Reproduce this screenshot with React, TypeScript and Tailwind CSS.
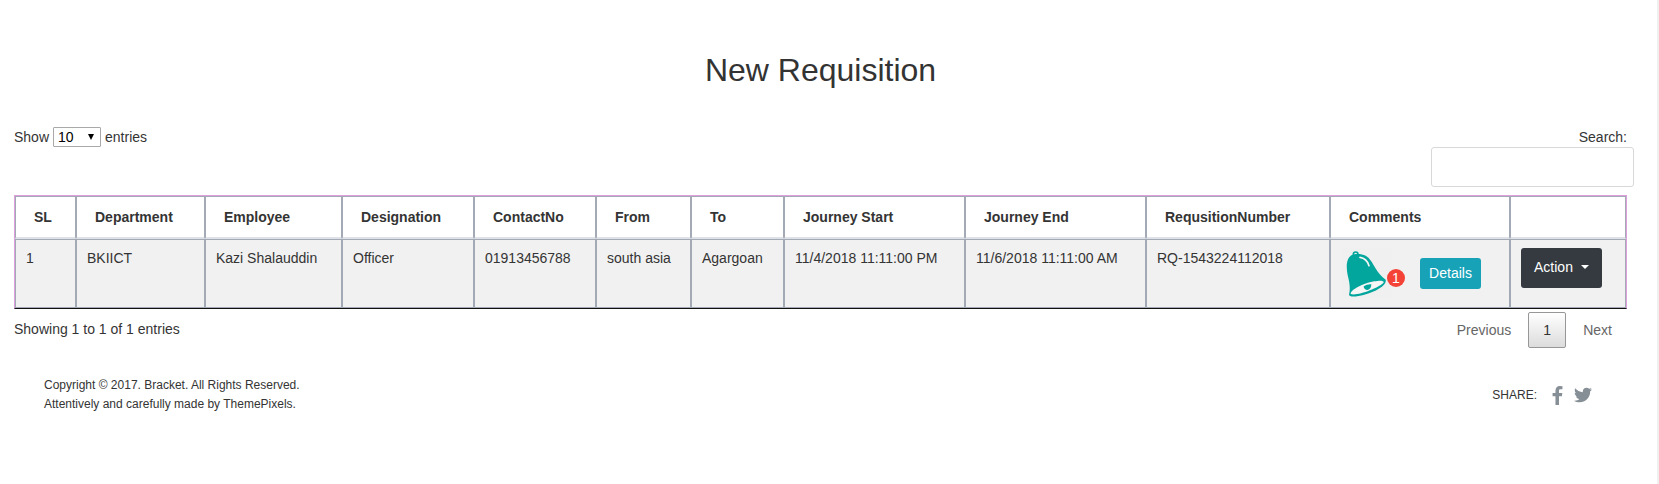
import { FaTwitter } from "react-icons/fa";

type Column = { label: string; value?: string; width: number };

const columns: Column[] = [
  { label: "SL", value: "1", width: 61 },
  { label: "Department", value: "BKIICT", width: 129 },
  { label: "Employee", value: "Kazi Shalauddin", width: 137 },
  { label: "Designation", value: "Officer", width: 132 },
  { label: "ContactNo", value: "01913456788", width: 122 },
  { label: "From", value: "south asia", width: 95 },
  { label: "To", value: "Agargoan", width: 93 },
  { label: "Journey Start", value: "11/4/2018 11:11:00 PM", width: 181 },
  { label: "Journey End", value: "11/6/2018 11:11:00 AM", width: 181 },
  { label: "RequsitionNumber", value: "RQ-1543224112018", width: 184 },
  { label: "Comments", width: 180 },
  { label: "", width: 116 },
];

const totalWidth = columns.reduce((sum, column) => sum + column.width, 0);

function BellIcon() {
  return (
    <svg viewBox="66 52 150 150" className="size-[50px] shrink-0 bg-[#f0f0f0]" aria-hidden="true">
      <circle cx="107" cy="71" r="7" fill="none" stroke="#03a69c" strokeWidth="5" />
      <path
        d="M94 74 C106 68 124 69 137 75 C149 81 157 96 166 112 C175 127 184 138 197 147 C202 163 168 183 133 192 C110 198 88 200 87 192 C92 172 88 154 83 134 C78 108 79 84 94 74Z"
        fill="#03a69c"
      />
      <path d="M92 190 C90 178 130 158 162 152 C184 148 196 150 189 158 C174 172 112 197 92 190Z" fill="#f6f6f6" />
      <path d="M131 167 C138 162 148 160 154 161 C154 171 149 177 143 178 C136 178 131 174 131 167Z" fill="#03a69c" />
      <path d="M120 80 C134 82 143 92 147 105" fill="none" stroke="#f6f6f6" strokeWidth="5" strokeLinecap="round" />
    </svg>
  );
}

function FacebookIcon() {
  return (
    <svg viewBox="479 0 864 1664" className="h-[19px] w-[11px]" fill="currentColor" aria-hidden="true">
      <path d="M1343 12v264h-157q-86 0-116 36t-30 108v189h293l-39 296h-254v759h-306v-759h-255v-296h255v-218q0-186 104-288.5t277-102.5q147 0 228 12z" />
    </svg>
  );
}

export default function App() {
  return (
    <div className="min-h-screen border-r-2 border-[#f0f0f0] bg-white pr-[30px] pl-[14px] font-['Liberation_Sans',Arial,sans-serif] text-sm leading-[21px] text-[#343434]">
      <h1 className="pt-[50px] text-center text-[32px] leading-10 text-[#333333]">New Requisition</h1>

      <div className="mt-9 flex items-start justify-between">
        <label className="flex items-center gap-1">
          <span className="pt-[2px] leading-[19px]">Show</span>
          <span className="relative flex items-center">
            <select className="h-5 w-12 appearance-none rounded-[1px] border border-[#a9a9a9] bg-white pl-1 text-sm leading-4 text-black">
              <option>10</option>
              <option>25</option>
              <option>50</option>
              <option>100</option>
            </select>
            <svg viewBox="0 0 6 6" className="pointer-events-none absolute right-[7px] size-[6px]" aria-hidden="true">
              <path d="M0 0H6L3 6Z" fill="#000" />
            </svg>
          </span>
          <span className="pt-[2px] leading-[19px]">entries</span>
        </label>
        <label className="-mr-[7px] flex flex-col items-end">
          <span className="pt-[2px] pr-[7px] leading-[19px]">Search:</span>
          <input type="search" className="h-10 w-[203px] rounded-[3px] border border-[#d8d8d8] bg-white px-3" />
        </label>
      </div>

      <table className="mt-2 w-full table-fixed border-separate border-spacing-0 border border-[#dda0dd] border-b-[#111111]">
        <colgroup>
          {columns.map((column) => (
            <col key={column.label} style={{ width: `${(column.width / totalWidth) * 100}%` }} />
          ))}
        </colgroup>
        <thead>
          <tr>
            {columns.map((column) => (
              <th
                key={column.label}
                scope="col"
                className="h-[43px] border border-b-2 border-[#a3a9b5] border-b-[#dee2e6] px-[18px] py-[10px] text-left leading-5 font-bold"
              >
                {column.label}
              </th>
            ))}
          </tr>
        </thead>
        <tbody>
          <tr className="bg-[#f1f1f1] align-top">
            {columns.slice(0, 10).map((column) => (
              <td key={column.label} className="border border-[#a3a9b5] px-[10px] py-2 whitespace-nowrap">
                {column.value}
              </td>
            ))}
            <td className="border border-[#a3a9b5] px-[11px] py-2">
              <div className="flex h-[51px] items-start">
                <BellIcon />
                <span className="mt-[21px] -ml-[5px] flex size-[18px] items-center justify-center rounded-full bg-[#f44336] text-white">
                  1
                </span>
                <button
                  type="button"
                  className="mt-[10px] ml-[15px] h-[31px] w-[61px] rounded-[3px] bg-[#17a2b8] text-white"
                >
                  Details
                </button>
              </div>
            </td>
            <td className="border border-[#a3a9b5] px-[10px] py-2">
              <button
                type="button"
                className="flex h-10 w-[81px] items-center justify-center gap-2 rounded-[3px] bg-[#343a40] pb-[2px] text-white"
              >
                Action
                <svg viewBox="0 0 8 4" className="h-1 w-2" aria-hidden="true">
                  <path d="M0 0H8L4 4Z" fill="#fff" />
                </svg>
              </button>
            </td>
          </tr>
        </tbody>
      </table>

      <div className="flex items-start justify-between pt-[3px]">
        <p className="pt-[7px]">Showing 1 to 1 of 1 entries</p>
        <nav className="flex items-center text-[#666666]" aria-label="Pagination">
          <button type="button" className="h-9 px-[15px]">
            Previous
          </button>
          <button
            type="button"
            aria-current="page"
            className="mx-[2px] h-9 w-[38px] rounded-[2px] border border-[#979797] bg-linear-to-b from-white to-[#dcdcdc] text-[#333333]"
          >
            1
          </button>
          <button type="button" className="h-9 px-[15px]">
            Next
          </button>
        </nav>
      </div>

      <footer className="mt-7 flex items-center justify-between pr-[35px] pl-[30px] text-xs leading-[19px]">
        <div>
          <p>Copyright © 2017. Bracket. All Rights Reserved.</p>
          <p>Attentively and carefully made by ThemePixels.</p>
        </div>
        <div className="flex items-center">
          <span>SHARE:</span>
          <a href="#facebook" aria-label="Share on Facebook" className="ml-[15px] text-[#868e96]">
            <FacebookIcon />
          </a>
          <a href="#twitter" aria-label="Share on Twitter" className="ml-[11px] text-[#868e96]">
            <FaTwitter className="size-[18px]" />
          </a>
        </div>
      </footer>
    </div>
  );
}
